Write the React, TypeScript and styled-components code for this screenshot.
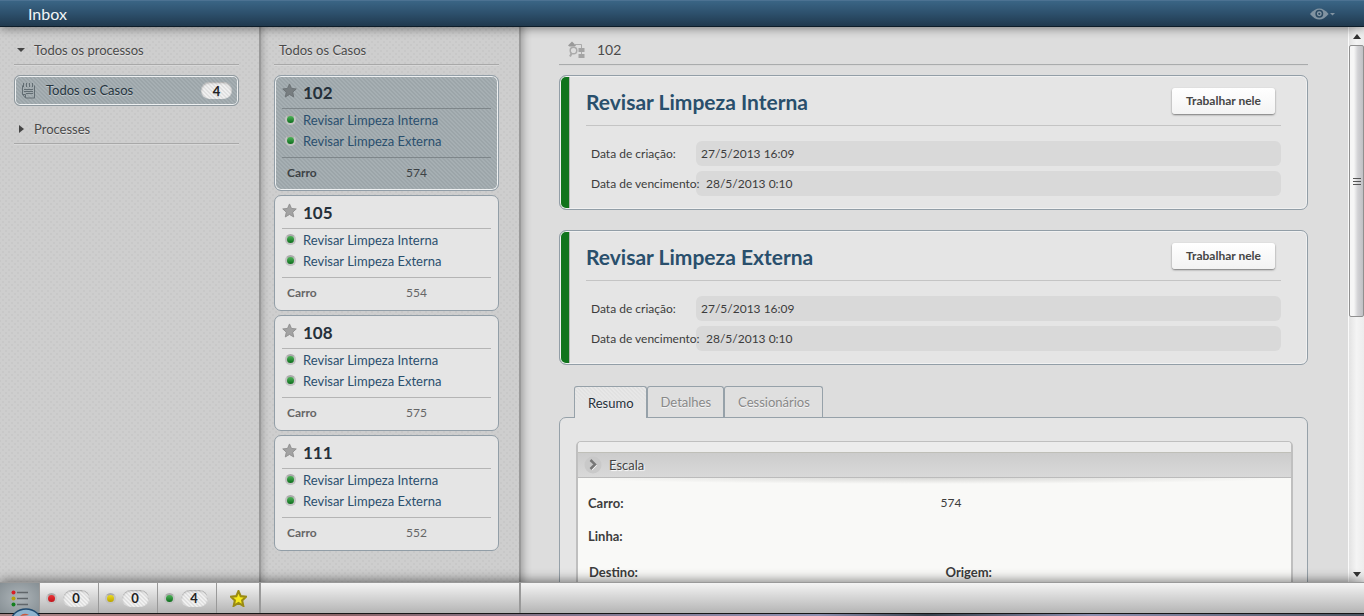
import React from "react";
import styled, { createGlobalStyle, css } from "styled-components";

const Global = createGlobalStyle`
  * { box-sizing: border-box; }
  html, body { margin: 0; height: 100%; overflow: hidden; }
  body { font-family: Lato, "Liberation Sans", sans-serif; font-size: 13px; line-height: 16px; color: #4a4a4a; background: #ddd; }
  button { font: inherit; color: inherit; border: 0; margin: 0; padding: 0; background: none; text-align: left; cursor: pointer; }
  h1, h2, h3, p, dl, dd, dt, ul { margin: 0; padding: 0; font-weight: 400; list-style: none; }
  a { color: inherit; text-decoration: none; }
`;

const hatch = "linear-gradient(45deg, #9ca5a9 25%, transparent 25% 50%, #9ca5a9 50% 75%, transparent 75%) 0 0 / 4px 4px";
const paleHatch = "linear-gradient(45deg, #e0e0e0 25%, transparent 25% 50%, #e0e0e0 50% 75%, transparent 75%) 0 0 / 4px 4px";

const Page = styled.div`
  display: grid;
  grid-template-rows: 27px minmax(0, 1fr) 34px;
  height: 100vh;
`;

const Header = styled.header`
  display: flex;
  align-items: center;
  justify-content: space-between;
  padding: 1px 27px 0 28px;
  background: linear-gradient(#4c7292 0 1px, #3a6585 1px, #2d506c 50%, #20394e 26px, #0d1d2a 26px);
  box-shadow: 0 2px 10px rgba(0, 0, 0, 0.4);
  color: #f2f5f7;
  position: relative;
  z-index: 2;
`;

const AppTitle = styled.h1`
  font-size: 16px;
  line-height: 20px;
`;

const EyeButton = styled.button`
  display: flex;
`;

const Columns = styled.div`
  display: grid;
  grid-template-columns: 261px 260px minmax(0, 1fr) 16px;
  min-height: 0;
`;

const sidePanel = css`
  border-right: 2px solid #999;
  background-color: #cecece;
  background-image: radial-gradient(circle, #c8c8c8 0 1px, transparent 1px), radial-gradient(circle, #c8c8c8 0 1px, transparent 1px);
  background-size: 6px 6px;
  background-position: 0 0, 3px 3px;
  overflow: hidden;
`;

const Sidebar = styled.nav`
  ${sidePanel}
  padding: 13px 20px 0 14px;
`;

const CaseColumn = styled.section`
  ${sidePanel}
  padding: 13px 20px 0 13px;
  box-shadow: inset 6px 0 6px -4px rgba(0, 0, 0, 0.2);
`;

const PanelTitle = styled.h2`
  display: flex;
  align-items: center;
  height: 25px;
  padding: 0 0 5px 5px;
  border-bottom: 1px solid #a8a8a8;
  box-shadow: 0 1px 0 #d8d8d8;
  font-size: 13px;
  line-height: 20px;
  text-shadow: 0 1px 0 #e4e4e4;
`;

const GroupToggle = styled.button`
  display: flex;
  align-items: center;
  width: 100%;
  height: 25px;
  padding: 0 0 5px 3px;
  gap: 9px;
  border-bottom: 1px solid #a8a8a8;
  box-shadow: 0 1px 0 #d8d8d8;
  line-height: 20px;
  text-shadow: 0 1px 0 #e4e4e4;
`;

const Filter = styled.button`
  display: flex;
  align-items: center;
  width: 100%;
  height: 31px;
  margin: 10px 0 13px;
  padding: 0 6px;
  gap: 10px;
  border: 1px solid #8f999f;
  border-radius: 6px;
  background: ${hatch}, #a6afb3;
  box-shadow: inset 0 0 0 1px #eef0f1;
  color: #263540;
  text-shadow: 0 1px 0 #c3cacd;
`;

const FilterLabel = styled.span`
  flex: 1;
  padding-bottom: 2px;
`;

const Count = styled.span<{ $width: number }>`
  display: grid;
  place-items: center;
  width: ${(p) => p.$width}px;
  height: 17px;
  border-radius: 9px;
  background: ${paleHatch}, #f0f0f0;
  box-shadow: inset 0 1px 2px rgba(0, 0, 0, 0.3);
  color: #222;
  font-weight: 700;
`;

const CaseList = styled.ul`
  display: grid;
  gap: 4px;
  margin-top: 10px;
`;

const CaseCard = styled.li<{ $selected: boolean }>`
  height: 116px;
  padding: 6px 7px 0 7px;
  border: 1px solid #929ea7;
  border-radius: 7px;
  background: ${(p) => (p.$selected ? `${hatch}, #a6afb3` : "#e5e5e5")};
  box-shadow: ${(p) => (p.$selected ? "inset 0 0 0 1px #eef0f1" : "none")};
  color: ${(p) => (p.$selected ? "#3d4245" : "#666")};
  --rule: ${(p) => (p.$selected ? "#7e868a" : "#b4b4b4")};
`;

const CaseHead = styled.div`
  display: flex;
  align-items: center;
  height: 27px;
  gap: 6px;
  padding-bottom: 9px;
  border-bottom: 1px solid var(--rule);
`;

const CaseNumber = styled.h3`
  padding-top: 4px;
  color: #25303a;
  font-size: 17px;
  font-weight: 700;
  line-height: 20px;
`;

const TaskList = styled.ul`
  height: 49px;
  border-bottom: 1px solid var(--rule);
`;

const Task = styled.li`
  display: flex;
  align-items: center;
  height: 21px;
  gap: 7px;
  padding-left: 3px;
  color: #2a4f6e;
`;

const Field = styled.dl`
  display: grid;
  grid-template-columns: 119px 1fr;
  padding: 7px 0 0 5px;
  font-size: 12px;
`;

const FieldName = styled.dt`
  font-weight: 700;
`;

const Dot = styled.span<{ $top: string; $bottom: string }>`
  width: 11px;
  height: 11px;
  border: 2px solid #c2c2c2;
  border-top-color: #aaa;
  border-radius: 50%;
  background: linear-gradient(${(p) => p.$top}, ${(p) => p.$bottom});
`;

const Main = styled.main`
  padding: 13px 40px 0 38px;
  background: #ddd;
  box-shadow: inset 8px 0 8px -6px rgba(0, 0, 0, 0.3);
  overflow: hidden;
`;

const MainTitle = styled(PanelTitle)`
  padding-left: 9px;
  gap: 12px;
  border-color: #a9abac;
  font-size: 14px;
`;

const TaskPanel = styled.article`
  height: 135px;
  margin: 10px 0 20px;
  padding: 10px 26px 0;
  border: 1px solid #929ea7;
  border-radius: 7px;
  background: linear-gradient(90deg, #10741c 0 9px, #b5b5b5 9px 10px, #e5e5e5 10px) padding-box;
  box-shadow: inset 0 0 0 1px #f1f1f1;
  & + & { margin-bottom: 21px; margin-top: 0; }
`;

const TaskHead = styled.div`
  display: flex;
  align-items: center;
  justify-content: space-between;
  height: 40px;
  padding: 0 6px 10px 0;
  border-bottom: 1px solid #c4c4c4;
`;

const TaskTitle = styled.h2`
  padding-top: 3px;
  color: #294f6c;
  font-size: 21px;
  font-weight: 700;
  line-height: 26px;
`;

const WorkButton = styled.button`
  height: 26px;
  padding: 0 14px;
  border-radius: 3px;
  background: linear-gradient(#fff, #f3f3f3);
  box-shadow: 0 1px 2px #777;
  color: #464646;
  font-size: 12px;
  font-weight: 700;
`;

const Dates = styled.dl`
  display: grid;
  gap: 5px;
  padding-top: 15px;
  font-size: 12px;
`;

const DateRow = styled.div`
  display: grid;
  grid-template-columns: 110px 1fr;
  align-items: center;
  height: 25px;
  color: #3c3c3c;
`;

const DateName = styled.dt`
  position: relative;
  z-index: 1;
  padding-left: 5px;
  white-space: nowrap;
`;

const DateValue = styled.dd<{ $indent: number }>`
  padding-left: ${(p) => p.$indent}px;
  border-radius: 6px;
  background: #d9d9d9;
  line-height: 25px;
`;

const Tabs = styled.div`
  display: flex;
  padding-left: 15px;
`;

const Tab = styled.button<{ $active?: boolean }>`
  height: ${(p) => (p.$active ? 32 : 31)}px;
  margin-bottom: ${(p) => (p.$active ? -1 : 0)}px;
  padding: 0 12px 0 13px;
  border: 1px solid #96a1a9;
  border-bottom: 0;
  border-radius: 3px 3px 0 0;
  position: relative;
  background: ${(p) => (p.$active ? `linear-gradient(transparent, #e5e5e5 20px), ${paleHatch}, #e8e8e8` : "#dfdfdf")};
  color: ${(p) => (p.$active ? "#25303a" : "#888")};
  text-shadow: 0 1px 0 #f4f4f4;
`;

const TabBody = styled.section`
  height: 400px;
  padding: 23px 14px 0 16px;
  border: 1px solid #96a1a9;
  border-radius: 7px;
  background: #e5e5e5;
`;

const Form = styled.div`
  height: 360px;
  border: 1px solid #bfbfbf;
  border-width: 1px 2px;
  border-radius: 5px;
  background: #f9f9f7;
  overflow: hidden;
`;

const FormTop = styled.div`
  height: 10px;
  background: #ececec;
`;

const FormHead = styled.button`
  display: flex;
  align-items: center;
  width: 100%;
  height: 26px;
  gap: 7px;
  padding-left: 6px;
  border-top: 1px solid #bfbfb8;
  border-bottom: 1px solid #bbb;
  background: linear-gradient(#ccc, #d9d9d9);
  text-shadow: 1px 1px 1px #fff;
  color: #444;
`;

const FormShade = styled.div`
  height: 7px;
  background: radial-gradient(50% 6px at 50% 0, #d8d8d6, #f9f9f7);
`;

const FormBody = styled.dl`
  display: grid;
  grid-template-columns: 1fr 1fr;
  padding: 10px 0 0 10px;
  color: #3d3d3d;
`;

const FormCell = styled.dd`
  height: 33px;
  padding-left: 1px;
  font-size: 12px;
`;

const FormLabel = styled.dt<{ $inset?: number }>`
  padding: ${(p) => (p.$inset ? 3 : 0)}px 0 0 ${(p) => p.$inset ?? 0}px;
  font-weight: 700;
`;

const ScrollTrack = styled.div`
  display: grid;
  grid-template-rows: 18px 272px 1fr 16px;
  justify-items: center;
  border-left: 1px solid #fafafa;
  background: linear-gradient(90deg, #e3e3e3, #f4f4f4 50%, #ededed);
`;

const ScrollThumb = styled.div`
  display: grid;
  place-items: center;
  width: 100%;
  border: 1px solid #909090;
  border-radius: 2px;
  background: linear-gradient(90deg, #f6f6f6 30%, #d2d2d5 60%, #c0c0c4);
`;

const ScrollArrow = styled.svg`
  align-self: center;
`;

const Footer = styled.footer`
  display: grid;
  grid-template-columns: 261px 260px 1fr;
  grid-template-rows: 31px 3px;
  position: relative;
  box-shadow: 0 -2px 10px rgba(0, 0, 0, 0.45);
`;

const FootCell = styled.div`
  display: flex;
  border-top: 1px solid #999;
  border-right: 2px solid #999;
  background: linear-gradient(#f4f4f4, #b4b4b4);
  &:nth-child(3) { border-right: 0; }
`;

const FootButton = styled.button<{ $width: number; $active?: boolean }>`
  display: flex;
  align-items: center;
  justify-content: center;
  gap: 6px;
  width: ${(p) => p.$width}px;
  padding-right: ${(p) => (p.$width > 50 ? 3 : 0)}px;
  border-right: 1px solid #999;
  background: ${(p) => (p.$active ? "radial-gradient(#aeb5b9, #868f94)" : "none")};
  &:last-child { border-right: 0; }
`;

const DesktopStrip = styled.div`
  grid-column: 1 / -1;
  border-top: 1px solid #161616;
  background: linear-gradient(90deg, #a98486, #8c6468 25%, #82768f 42%, #8e8fb0 60%, #38414d 68%, #8e8fb0 80%, #4b5360);
`;

const StartOrb = styled.svg`
  position: absolute;
  left: 10px;
  bottom: 0;
`;

const Star = ({ size, fill, stroke, thick = 1 }: { size: number; fill: string; stroke: string; thick?: number }) => (
  <svg width={size} height={size} viewBox="0 0 16 16" aria-hidden="true">
    <path d="M8 1l2.100 4.800 5.100.5-3.800 3.500 1.100 5.100L8 12.200l-4.500 2.700 1.100-5.100L.8 6.300l5.100-.5z" fill={fill} stroke={stroke} strokeWidth={thick} />
  </svg>
);

const Eye = () => (
  <svg width="27" height="12" viewBox="0 0 27 12" aria-hidden="true">
    <path d="M0 6Q9.300 -5 18.600 6Q9.300 17 0 6z" fill="#8193a1" />
    <circle cx="9.300" cy="5.800" r="3.200" fill="#8b9ca9" stroke="#2c4a62" strokeWidth="1.500" />
    <circle cx="9.300" cy="5.800" r="1.100" fill="#2c4a62" />
    <path d="M20 5h5l-2.500 2.500z" fill="#8193a1" />
  </svg>
);

const Notepad = () => (
  <svg width="15" height="17" viewBox="0 0 15 17" fill="none" stroke="#626d73" aria-hidden="true">
    <path d="M1.500 3.500v9l3 3.500h9V3.500" />
    <path d="M1.500 12.500h3V16" />
    <path d="M2.500 1v4M5.500 1v4M8.500 1v4M11.500 1v4M3 7.500h9M3 9.500h9M5 11.500h7" />
  </svg>
);

const Flow = () => (
  <svg width="17" height="18" viewBox="0 0 17 18" fill="none" aria-hidden="true">
    <path d="M0 4.500L4 .5l4 4-1.500 1h-5z" fill="#999" />
    <path d="M6 3.500h7.500V7M13.500 10v3" stroke="#aaa" />
    <circle cx="5.500" cy="9.500" r="3.300" stroke="#aaa" strokeWidth="1.500" />
    <path d="M3.800 12L2 15.500" stroke="#aaa" strokeWidth="2" />
    <path d="M10.500 7h6v4h-6zM10.500 13h6v4h-6z" fill="#a4a4a4" />
  </svg>
);

const Chevron = () => (
  <svg width="18" height="18" viewBox="0 0 18 18" fill="none" aria-hidden="true">
    <circle cx="9" cy="9" r="8.500" fill="#c9c9c9" />
    <path d="M7.500 5.500l4 4-4 4" stroke="#fff" strokeWidth="2" />
    <path d="M6.500 4l4.500 4.500-4.500 4.500" stroke="#777" strokeWidth="2.500" />
  </svg>
);

const ListIcon = () => (
  <svg width="17" height="17" viewBox="0 0 17 17" aria-hidden="true">
    <circle cx="2.500" cy="2.500" r="2" fill="#d81f26" />
    <circle cx="2.500" cy="8.500" r="2" fill="#b5a00c" />
    <circle cx="2.500" cy="14.500" r="2" fill="#14801f" />
    <path d="M6 2.500h11M6 8.500h11M6 14.500h11" stroke="#60666a" strokeWidth="1.500" />
  </svg>
);

const green = { $top: "#4fb45a", $bottom: "#0d6d1c" };
const cases = [
  { id: "102", car: "574" },
  { id: "105", car: "554" },
  { id: "108", car: "575" },
  { id: "111", car: "552" },
];
const tasks = ["Revisar Limpeza Interna", "Revisar Limpeza Externa"];
const counters = [
  { label: "Vermelho", value: 0, $top: "#ea3538", $bottom: "#c1151c" },
  { label: "Amarelo", value: 0, $top: "#eedb1d", $bottom: "#b9a400" },
  { label: "Verde", value: 4, ...green },
];

export default function App() {
  return (
    <>
      <Global />
      <Page>
        <Header>
          <AppTitle>Inbox</AppTitle>
          <EyeButton aria-label="Visualizar"><Eye /></EyeButton>
        </Header>
        <Columns>
          <Sidebar>
            <GroupToggle aria-expanded="true">
              <svg width="8" height="8" aria-hidden="true"><path d="M0 2h8L4 6z" fill="#444" /></svg>
              Todos os processos
            </GroupToggle>
            <Filter>
              <Notepad />
              <FilterLabel>Todos os Casos</FilterLabel>
              <Count $width={31}>4</Count>
            </Filter>
            <GroupToggle aria-expanded="false">
              <svg width="8" height="8" aria-hidden="true"><path d="M2 0v8l5-4z" fill="#444" /></svg>
              Processes
            </GroupToggle>
          </Sidebar>
          <CaseColumn>
            <PanelTitle>Todos os Casos</PanelTitle>
            <CaseList>
              {cases.map((c, i) => (
                <CaseCard key={c.id} $selected={i === 0}>
                  <CaseHead>
                    <Star size={15} fill={i === 0 ? "#777d80" : "#a2a2a2"} stroke={i === 0 ? "#6b7174" : "#8f8f8f"} />
                    <CaseNumber>{c.id}</CaseNumber>
                  </CaseHead>
                  <TaskList>
                    {tasks.map((t) => (
                      <Task key={t}><Dot {...green} /><a href="#">{t}</a></Task>
                    ))}
                  </TaskList>
                  <Field><FieldName>Carro</FieldName><dd>{c.car}</dd></Field>
                </CaseCard>
              ))}
            </CaseList>
          </CaseColumn>
          <Main>
            <MainTitle><Flow />102</MainTitle>
            {tasks.map((t) => (
              <TaskPanel key={t}>
                <TaskHead>
                  <TaskTitle>{t}</TaskTitle>
                  <WorkButton>Trabalhar nele</WorkButton>
                </TaskHead>
                <Dates>
                  <DateRow><DateName>Data de criação:</DateName><DateValue $indent={5}>27/5/2013 16:09</DateValue></DateRow>
                  <DateRow><DateName>Data de vencimento:</DateName><DateValue $indent={10}>28/5/2013 0:10</DateValue></DateRow>
                </Dates>
              </TaskPanel>
            ))}
            <Tabs role="tablist">
              <Tab role="tab" aria-selected="true" $active>Resumo</Tab>
              <Tab role="tab">Detalhes</Tab>
              <Tab role="tab">Cessionários</Tab>
            </Tabs>
            <TabBody>
              <Form>
                <FormTop />
                <FormHead><Chevron />Escala</FormHead>
                <FormShade />
                <FormBody>
                  <FormLabel>Carro:</FormLabel><FormCell>574</FormCell>
                  <FormLabel>Linha:</FormLabel><FormCell />
                  <FormLabel $inset={1}>Destino:</FormLabel><FormLabel $inset={6}>Origem:</FormLabel>
                </FormBody>
              </Form>
            </TabBody>
          </Main>
          <ScrollTrack>
            <ScrollArrow width="8" height="5"><path d="M0 5l4-5 4 5z" fill="#333" /></ScrollArrow>
            <ScrollThumb>
              <svg width="8" height="9" aria-hidden="true"><path d="M0 1.500h8M0 4.500h8M0 7.500h8" stroke="#555" /></svg>
            </ScrollThumb>
            <span />
            <ScrollArrow width="8" height="5"><path d="M0 0h8L4 5z" fill="#333" /></ScrollArrow>
          </ScrollTrack>
        </Columns>
        <Footer>
          <FootCell>
            <FootButton $width={40} $active aria-label="Todos"><ListIcon /></FootButton>
            {counters.map(({ label, value, ...colors }) => (
              <FootButton key={label} $width={59} aria-label={label}>
                <Dot {...colors} />
                <Count $width={27}>{value}</Count>
              </FootButton>
            ))}
            <FootButton $width={42} aria-label="Favoritos"><Star size={17} fill="#f7ea1c" stroke="#9a8b14" thick={2} /></FootButton>
          </FootCell>
          <FootCell />
          <FootCell />
          <DesktopStrip />
          <StartOrb width="32" height="8" aria-hidden="true">
            <ellipse cx="16" cy="14" rx="15" ry="13" fill="#8fb4cf" stroke="#1f4a70" strokeWidth="1.500" />
            <path d="M10 8q4-4 9-1" fill="#d0563a" />
          </StartOrb>
        </Footer>
      </Page>
    </>
  );
}
